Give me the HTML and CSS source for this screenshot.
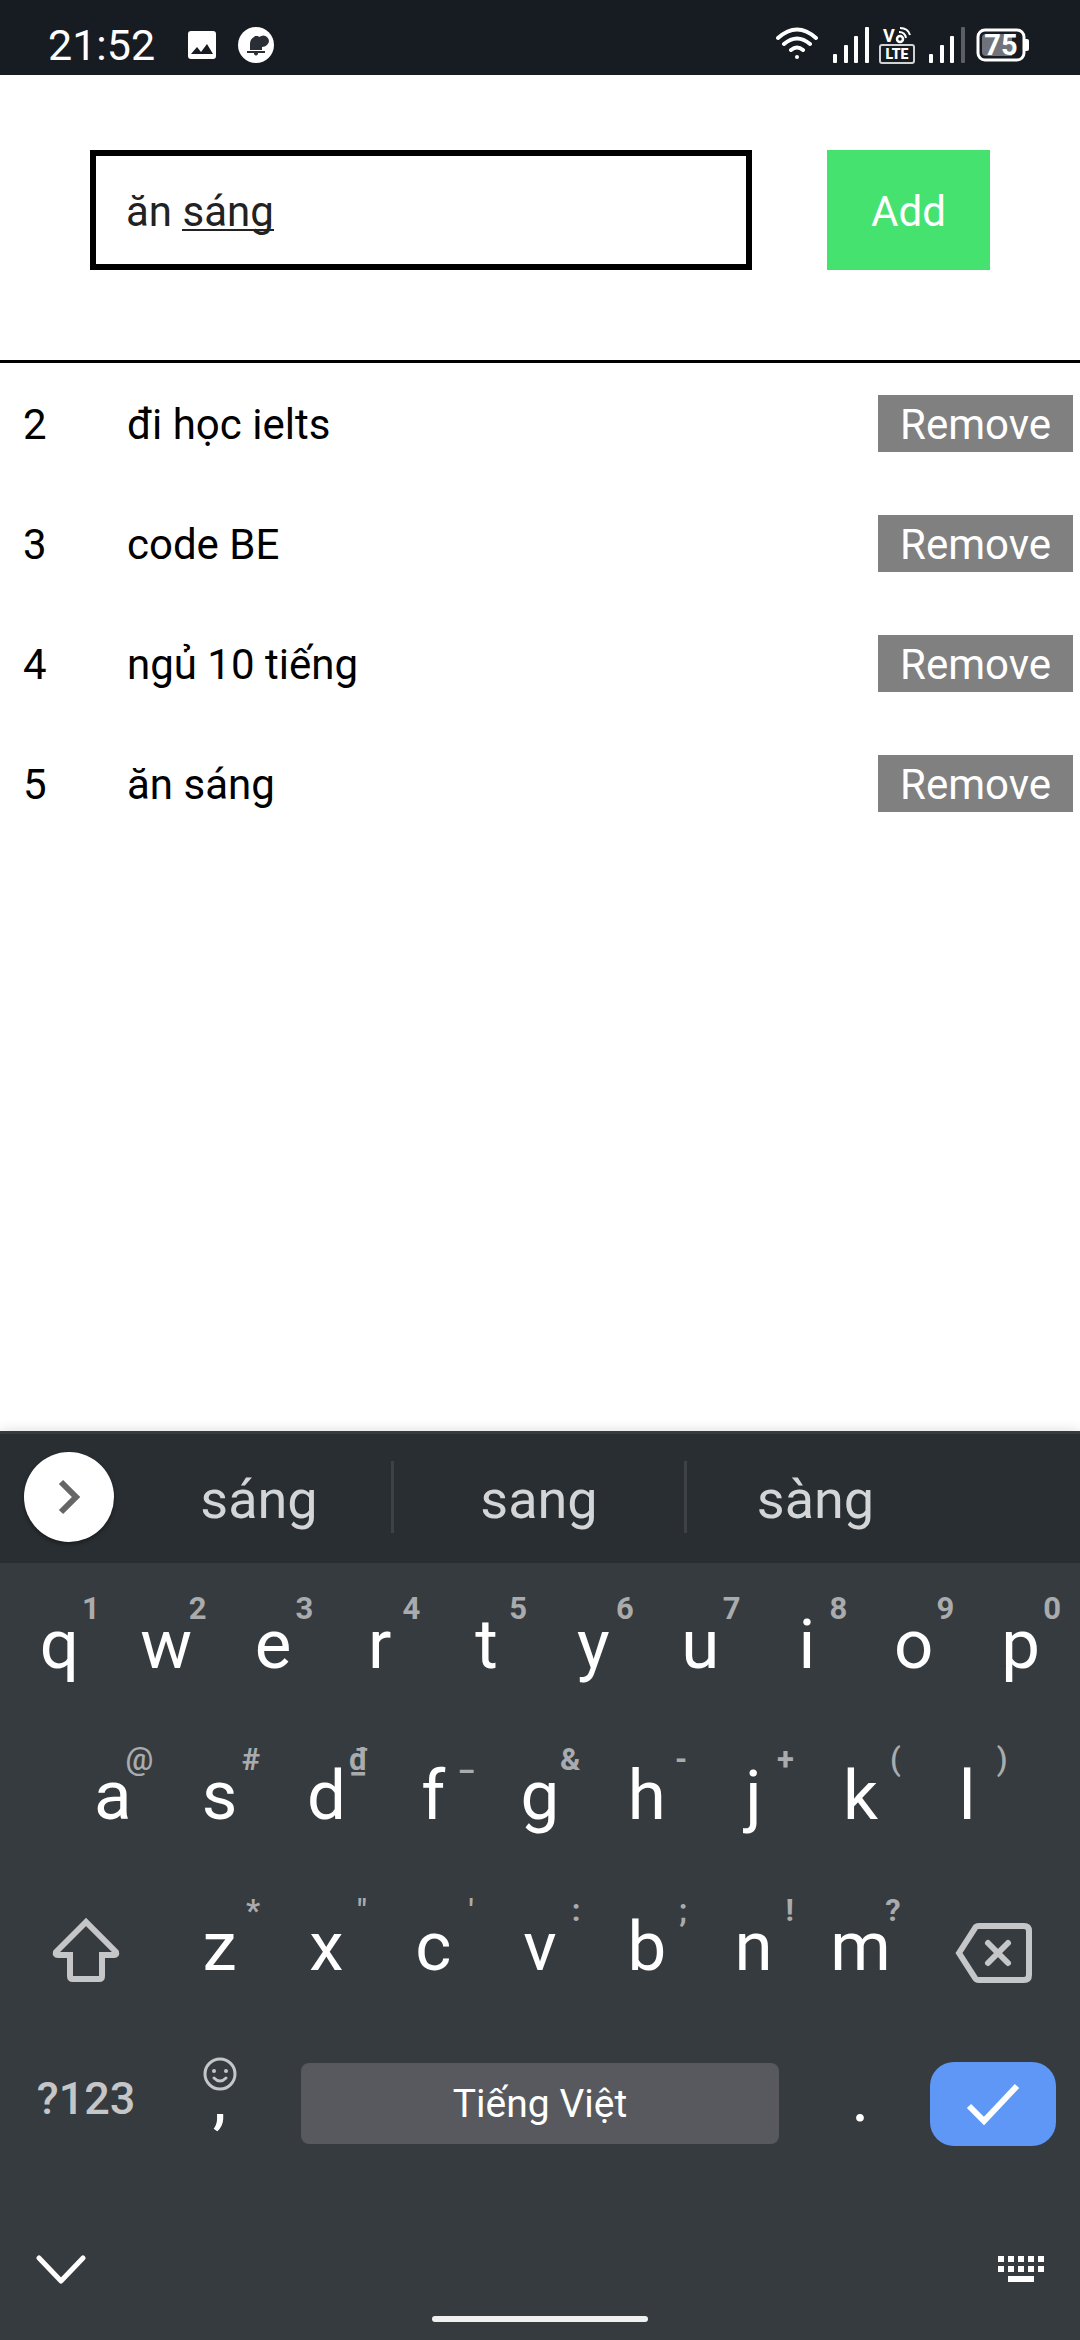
FILE: index.html
```html
<!DOCTYPE html>
<html lang="vi">
<head>
<meta charset="utf-8">
<meta name="viewport" content="width=device-width, initial-scale=1">
<title>Todo</title>
<link rel="stylesheet" href="styles.css">
</head>
<body>
<header class="status">
  <div class="status-group">
    <span class="clock">21:52</span>
    <svg class="icon-photo" width="30" height="30" viewBox="0 0 30 30" aria-hidden="true">
      <rect x="1" y="1" width="28" height="28" rx="3" fill="#fff"/>
      <path d="M4 24l6-7 4 5 6-8 6 10z" fill="#171b22"/>
    </svg>
    <svg class="icon-bell" width="36" height="36" viewBox="0 0 36 36" aria-hidden="true">
      <circle cx="18" cy="18" r="18" fill="#fff"/>
      <path d="M9 24h18v2H9z" fill="#2b2f35"/>
      <path d="M12 23V17q0-5 4-7l1-1h3l1 1q5-3 8 0 4 4 0 8-2 2-5 2v3z" fill="#2b2f35"/>
      <path d="M16 26h4v1q-2 3-4 0z" fill="#2b2f35"/>
    </svg>
  </div>
  <div class="status-group status-right">
    <svg width="42" height="36" viewBox="0 0 42 36" fill="none" stroke="#fff" stroke-width="4" stroke-linecap="round" aria-hidden="true">
      <path d="M2 11Q21-6 40 11M8 17q13-11 26 0M15 23q6-5 12 0"/>
      <circle cx="21" cy="30" r="2" fill="#fff" stroke="none"/>
    </svg>
    <svg class="icon-signal" width="36" height="36" viewBox="0 0 36 36" fill="#fff" aria-hidden="true">
      <rect x="0" y="27" width="4" height="9" rx="1"/><rect x="11" y="18" width="4" height="18" rx="1"/><rect x="21" y="9" width="4" height="27" rx="1"/><rect x="32" y="0" width="4" height="36" rx="1"/>
    </svg>
    <svg class="icon-lte" width="36" height="38" viewBox="0 0 36 38" aria-hidden="true">
      <text x="4" y="16" class="lte-v">V</text>
      <circle cx="21" cy="13" r="3" fill="none" stroke="#fff" stroke-width="2.5"/>
      <path d="M20 6q6 0 7 6M21 2q8 0 10 7" fill="none" stroke="#fff" stroke-width="2"/>
      <rect x="1" y="19" width="34" height="18" rx="2" fill="none" stroke="#d0d2d4" stroke-width="2"/>
      <text x="18" y="33" text-anchor="middle" class="lte-t">LTE</text>
    </svg>
    <svg class="icon-signal" width="36" height="36" viewBox="0 0 36 36" fill="#fff" aria-hidden="true">
      <rect x="0" y="27" width="4" height="9" rx="1"/><rect x="11" y="18" width="4" height="18" rx="1"/><rect x="21" y="9" width="4" height="27" rx="1"/><rect x="32" y="0" width="4" height="36" rx="1" fill="#5b5e63"/>
    </svg>
    <svg class="icon-battery" width="54" height="34" viewBox="0 0 54 34" aria-hidden="true">
      <rect x="2" y="2" width="46" height="30" rx="7" fill="none" stroke="#fff" stroke-width="3"/>
      <path d="M49 11h2q2 0 2 2v8q0 2-2 2h-2z" fill="#fff"/>
      <path d="M10 6h26v22H10q-4 0-4-4V10q0-4 4-4z" fill="#70737a"/>
      <text x="25" y="27" text-anchor="middle" class="battery-text">75</text>
    </svg>
  </div>
</header>

<main class="app">
  <form class="entry" onsubmit="return false">
    <div class="field">
      <input class="field-input" type="text" value="ăn sáng" aria-label="Công việc">
      <span class="composing"></span>
    </div>
    <button class="add" type="submit">Add</button>
  </form>
  <ul class="list">
    <li class="item"><span class="num">2</span><span class="name">đi học ielts</span><button class="remove" type="button">Remove</button></li>
    <li class="item"><span class="num">3</span><span class="name">code BE</span><button class="remove" type="button">Remove</button></li>
    <li class="item"><span class="num">4</span><span class="name">ngủ 10 tiếng</span><button class="remove" type="button">Remove</button></li>
    <li class="item"><span class="num">5</span><span class="name">ăn sáng</span><button class="remove" type="button">Remove</button></li>
  </ul>
</main>

<section class="keyboard" aria-label="Bàn phím">
  <div class="suggestions">
    <button class="expand" type="button" aria-label="Mở rộng">
      <svg width="90" height="90" viewBox="0 0 90 90" fill="none" stroke="#666" stroke-width="6"><path d="M37 30l15 15-15 15"/></svg>
    </button>
    <div class="words">
      <button class="word" type="button">sáng</button>
      <button class="word" type="button">sang</button>
      <button class="word" type="button">sàng</button>
    </div>
  </div>
  <div class="keys">
    <button class="key" type="button">q<span class="hint">1</span></button>
    <button class="key" type="button">w<span class="hint">2</span></button>
    <button class="key" type="button">e<span class="hint">3</span></button>
    <button class="key" type="button">r<span class="hint">4</span></button>
    <button class="key" type="button">t<span class="hint">5</span></button>
    <button class="key" type="button">y<span class="hint">6</span></button>
    <button class="key" type="button">u<span class="hint">7</span></button>
    <button class="key" type="button">i<span class="hint">8</span></button>
    <button class="key" type="button">o<span class="hint">9</span></button>
    <button class="key" type="button">p<span class="hint">0</span></button>

    <button class="key key-indent" type="button">a<span class="hint hint-light">@</span></button>
    <button class="key" type="button">s<span class="hint">#</span></button>
    <button class="key" type="button">d<span class="hint">₫</span></button>
    <button class="key" type="button">f<span class="hint">_</span></button>
    <button class="key" type="button">g<span class="hint">&amp;</span></button>
    <button class="key" type="button">h<span class="hint">-</span></button>
    <button class="key" type="button">j<span class="hint">+</span></button>
    <button class="key" type="button">k<span class="hint hint-light">(</span></button>
    <button class="key" type="button">l<span class="hint hint-light">)</span></button>

    <button class="key key-wide key-first" type="button" aria-label="Shift">
      <svg width="68" height="66" viewBox="0 0 68 66" fill="none" stroke="#c5c6c8" stroke-width="6"><path d="M34 5L4 35q-1 3 2 3h12v21q0 3 3 3h26q3 0 3-3V38h12q3 0 2-3z"/></svg>
    </button>
    <button class="key" type="button">z<span class="hint">*</span></button>
    <button class="key" type="button">x<span class="hint hint-light">"</span></button>
    <button class="key" type="button">c<span class="hint hint-light">'</span></button>
    <button class="key" type="button">v<span class="hint">:</span></button>
    <button class="key" type="button">b<span class="hint">;</span></button>
    <button class="key" type="button">n<span class="hint">!</span></button>
    <button class="key" type="button">m<span class="hint">?</span></button>
    <button class="key key-wide key-delete" type="button" aria-label="Xóa">
      <svg width="78" height="60" viewBox="0 0 78 60" fill="none" stroke="#c5c6c8" stroke-width="6"><path d="M4 30L20 5q1-2 4-2h45q5 0 5 5v44q0 5-5 5H24q-3 0-4-2z"/><path d="M33 20l20 20M53 20L33 40" stroke-linecap="round"/></svg>
    </button>

    <button class="key key-wide key-first key-symbols" type="button">?123</button>
    <button class="key key-punct" type="button">,
      <svg class="smile" width="34" height="34" viewBox="0 0 34 34" fill="none" stroke="#c5c6c8" stroke-width="3" aria-hidden="true"><circle cx="17" cy="17" r="15"/><path d="M11 21q6 6 12 0" stroke-linecap="round"/><circle cx="11" cy="14" r="2" fill="#c5c6c8" stroke="none"/><circle cx="23" cy="14" r="2" fill="#c5c6c8" stroke="none"/></svg>
    </button>
    <button class="key key-space" type="button">Tiếng Việt</button>
    <button class="key key-punct" type="button">.</button>
    <button class="key key-wide key-enter" type="button" aria-label="Xong">
      <svg width="54" height="42" viewBox="0 0 54 42" fill="none" stroke="#fff" stroke-width="6"><path d="M3 23l15 15L51 3"/></svg>
    </button>
  </div>
  <nav class="navbar">
    <button class="nav-button" type="button" aria-label="Ẩn bàn phím">
      <svg width="50" height="30" viewBox="0 0 50 30" fill="none" stroke="#fff" stroke-width="5" stroke-linecap="round" stroke-linejoin="round"><path d="M3 4l22 23L47 4"/></svg>
    </button>
    <span class="home"></span>
    <button class="nav-button" type="button" aria-label="Chọn bàn phím">
      <svg width="46" height="30" viewBox="0 0 46 30" fill="none" stroke="#fff" stroke-width="6"><path d="M0 5h46M0 15h46" stroke-dasharray="6 4"/><path d="M10 25h26"/></svg>
    </button>
  </nav>
</section>
</body>
</html>
```
FILE: styles.css
```css
* {
  box-sizing: border-box;
}

body {
  margin: 0;
  min-height: 100vh;
  display: flex;
  flex-direction: column;
  background: #fff;
  color: #000;
  font-family: Roboto, "Noto Sans", sans-serif;
  font-size: 42px;
  line-height: 49px;
}

button,
input {
  margin: 0;
  padding: 0;
  border: 0;
  border-radius: 0;
  background: none;
  color: inherit;
  font: inherit;
}

svg {
  display: block;
  flex: none;
}

/* Status bar */
.status {
  display: flex;
  justify-content: space-between;
  height: 75px;
  padding: 15px 50px 0 48px;
  background: #171b22;
  color: #fff;
}

.status-group {
  display: flex;
  align-items: center;
  height: 60px;
}

.clock {
  font-size: 43px;
}

.icon-photo {
  margin-left: 32px;
}

.icon-bell {
  margin-left: 21px;
}

.icon-signal {
  margin-left: 15px;
}

.icon-lte {
  margin-left: 10px;
  overflow: visible;
}

.icon-lte + .icon-signal {
  margin-left: 14px;
}

.icon-battery {
  margin-left: 11px;
}

.lte-v {
  fill: #fff;
  font-size: 18px;
  font-weight: 700;
}

.lte-t {
  fill: #fff;
  font-size: 14px;
  font-weight: 900;
}

.battery-text {
  fill: #fff;
  font-size: 29px;
  font-weight: 700;
}

/* Todo list */
.app {
  flex: 1;
}

.entry {
  display: flex;
  gap: 75px;
  padding: 75px 90px 90px;
  border-bottom: 3px solid #000;
}

.field {
  position: relative;
  flex: 1;
}

.field-input {
  width: 100%;
  height: 120px;
  padding: 2px 30px 0;
  border: 6px solid #000;
  color: #222;
  outline: 0;
}

/* Underline below the word being composed */
.composing {
  position: absolute;
  top: 79px;
  left: 92px;
  width: 92px;
  height: 2px;
  background: #222;
}

.add {
  width: 163px;
  padding-top: 2px;
  background: #45e270;
  color: #fff;
}

.list {
  margin: 0;
  padding: 0;
  list-style: none;
}

.item {
  display: flex;
  align-items: center;
  height: 120px;
  padding: 0 7px 0 23px;
}

.num {
  width: 104px;
  padding-top: 3px;
}

.name {
  flex: 1;
  padding-top: 3px;
}

.remove {
  padding: 5px 22px 3px;
  background: #808080;
  color: #fff;
}

/* Keyboard */
.keyboard {
  background: #363b3f;
  color: #fff;
  box-shadow: 0 0 12px rgba(0, 0, 0, 0.15);
}

.suggestions {
  display: flex;
  align-items: center;
  height: 132px;
  border-top: 3px solid #363b3f;
  padding: 0 136px 3px 24px;
  background: #292e32;
}

.expand {
  border-radius: 50%;
  background: #fff;
  box-shadow: 0 2px 4px rgba(0, 0, 0, 0.4);
}

.words {
  flex: 1;
  display: grid;
  grid-template-columns: 264fr 293fr 260fr;
  margin-left: 13px;
}

.word {
  height: 72px;
  color: #d4d5d6;
  font-size: 54px;
  line-height: 72px;
  padding-top: 3px;
}

.word + .word {
  border-left: 3px solid #3e4247;
}

.keys {
  display: grid;
  grid-template-columns: repeat(20, 1fr);
  grid-auto-rows: 151px;
  padding: 12px 6px 0;
}

.key {
  position: relative;
  grid-column: span 2;
  display: flex;
  align-items: center;
  justify-content: center;
  padding-bottom: 11px;
  font-size: 69px;
  line-height: 80px;
}

.key-indent {
  grid-column: 2 / span 2;
}

.key-wide {
  grid-column: span 3;
}

.key-first {
  grid-column: 1 / span 3;
}

.hint {
  position: absolute;
  top: 16px;
  right: 13px;
  color: #a9abad;
  font-size: 31px;
  font-weight: 700;
  line-height: 36px;
}

.hint-light {
  font-weight: 500;
}

.key-first {
  padding-bottom: 6px;
}

.key-delete {
  padding-bottom: 0;
}

.key-symbols {
  padding-bottom: 10px;
  color: #c5c6c8;
  font-size: 45px;
  font-weight: 500;
}

.key-punct {
  padding-bottom: 12px;
}

.smile {
  position: absolute;
  top: 29px;
  left: 50%;
  margin-left: -17px;
}

.key-space {
  grid-column: span 10;
  height: 81px;
  align-self: center;
  margin: 0 28px;
  padding-bottom: 0;
  border-radius: 8px;
  background: #57595e;
  font-size: 39px;
}

.key-enter {
  height: 84px;
  align-self: center;
  margin: 0 18px 0 16px;
  padding-bottom: 0;
  border-radius: 24px;
  background: #5e97f6;
}

.navbar {
  display: grid;
  grid-template-columns: 1fr 216px 1fr;
  align-items: start;
  height: 161px;
  padding: 75px 36px 0;
}

.nav-button {
  justify-self: start;
}

.nav-button:last-child {
  justify-self: end;
}

.home {
  height: 6px;
  margin-top: 62px;
  border-radius: 3px;
  background: #eff1f1;
}
```
